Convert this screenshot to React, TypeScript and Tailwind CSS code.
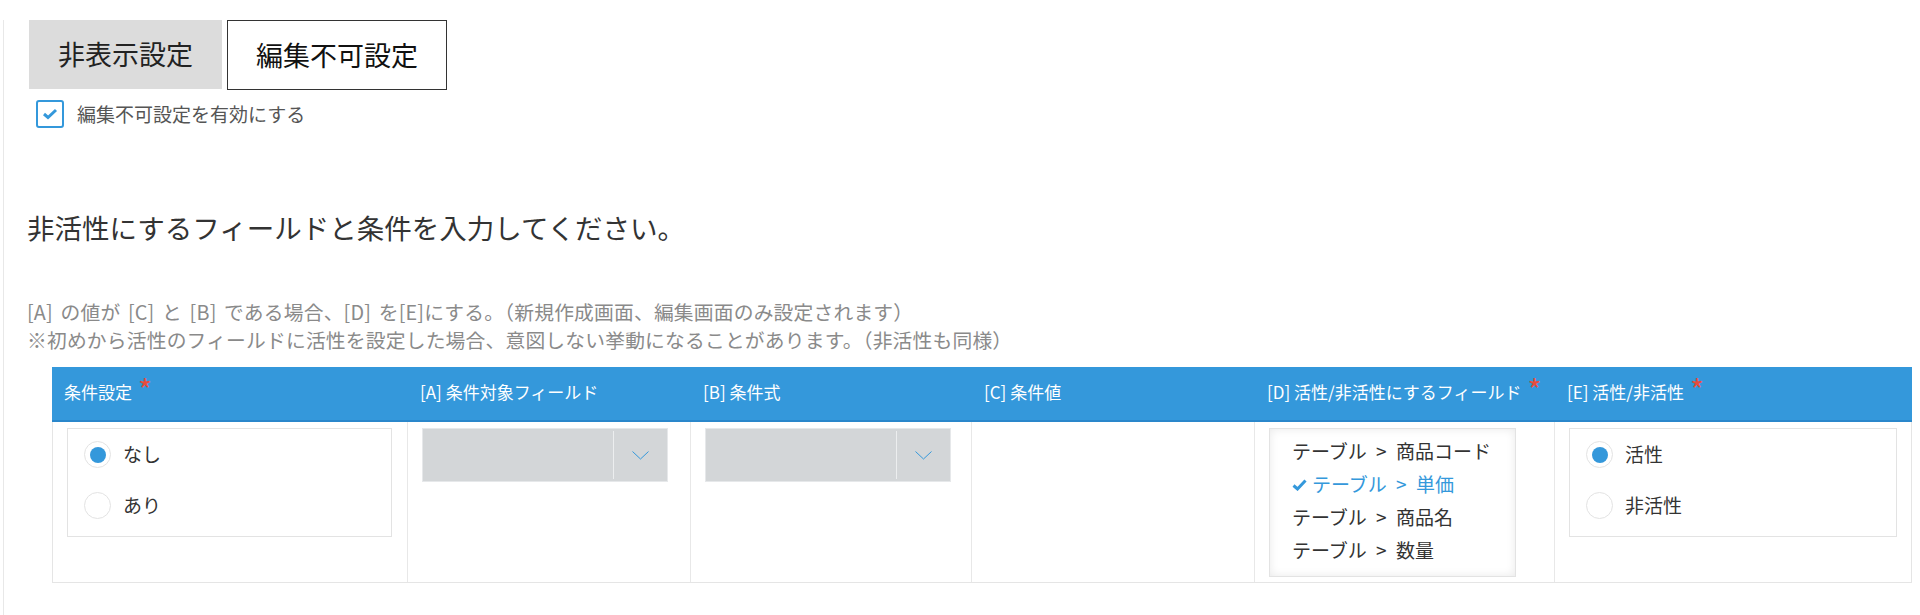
import { useState } from "react";

const FONT = "font-['Noto_Sans_CJK_JP','Noto_Sans',sans-serif]";

function Star() {
  return <span className="ml-[6px] text-[30px] leading-none text-[#e74c3c] relative top-[-3px]">*</span>;
}

function Radio({ checked, label }: { checked: boolean; label: string }) {
  return (
    <div className="flex items-center h-[27px]">
      <span className="w-[27px] h-[27px] rounded-full border-[1.5px] border-[#e3e3e3] flex items-center justify-center bg-white">
        {checked && <span className="w-[16px] h-[16px] rounded-full bg-[#3498db]" />}
      </span>
      <span className="ml-[12px] text-[19px] text-[#333]">{label}</span>
    </div>
  );
}

function RadioGroup({ options, value }: { options: string[]; value: number }) {
  return (
    <div className="border border-[#e3e3e3] h-[109px] pl-[16px] pt-[12px] flex flex-col gap-[24px]">
      {options.map((o, i) => <Radio key={o} checked={i === value} label={o} />)}
    </div>
  );
}

function Select() {
  return (
    <div className="w-[246px] h-[54px] bg-[#d3d6d8] border border-[#e6e8ea] flex">
      <div className="flex-1" />
      <div className="w-px my-[2px] bg-[#eceeef]" />
      <div className="w-[53px] flex items-center justify-center">
        <svg width="17" height="9" viewBox="0 0 17 9" fill="none">
          <path d="M0.5 0.5 L8.5 8 L16.5 0.5" stroke="#3498db" strokeWidth="1" />
        </svg>
      </div>
    </div>
  );
}

const FIELDS = ["テーブル > 商品コード", "テーブル > 単価", "テーブル > 商品名", "テーブル > 数量"];

function FieldList() {
  const selected = 1;
  return (
    <div className="w-[247px] h-[149px] border border-[#e3e3e3] shadow-[inset_0_0_10px_rgba(0,0,0,0.09)] pl-[22px] pt-[6px]">
      {FIELDS.map((f, i) => (
        <div key={f} className={`h-[33px] flex items-center text-[19px] [word-spacing:5px] ${i === selected ? "text-[#3498db]" : "text-[#333]"}`}>
          {i === selected && (
            <svg width="15" height="12" viewBox="0 0 15 12" className="mr-[5px]">
              <path d="M1.5 6.5 L5.5 10 L13.5 1.5" stroke="#3498db" strokeWidth="3" fill="none" />
            </svg>
          )}
          {f}
        </div>
      ))}
    </div>
  );
}

export default function App() {
  const [enabled, setEnabled] = useState(true);

  const headers: { label: string; req?: boolean; w: string }[] = [
    { label: "条件設定", req: true, w: "w-[356px]" },
    { label: "[A] 条件対象フィールド", w: "w-[283px]" },
    { label: "[B] 条件式", w: "w-[281px]" },
    { label: "[C] 条件値", w: "w-[283px]" },
    { label: "[D] 活性/非活性にするフィールド", req: true, w: "w-[300px]" },
    { label: "[E] 活性/非活性", req: true, w: "w-[357px]" },
  ];

  return (
    <div className={`min-h-screen w-full bg-white pt-5 pl-[3px] ${FONT}`}>
      <div className="border-l border-[#e8e8e8] pl-[25px] min-h-[595px]">
        {/* tabs */}
        <div className="flex gap-[5px]">
          <button className="w-[193px] h-[69px] bg-[#dcdcdc] text-[27px] text-[#222]">非表示設定</button>
          <button className="w-[220px] h-[70px] bg-white border border-[#333] text-[27px] text-[#111]">編集不可設定</button>
        </div>

        {/* enable checkbox */}
        <label className="mt-[10px] ml-[7px] flex items-center h-[28px] cursor-pointer" onClick={() => setEnabled(e => !e)}>
          <span className="w-[28px] h-[28px] border-2 border-[#3498db] rounded-[3px] bg-white flex items-center justify-center">
            {enabled && (
              <svg width="16" height="12" viewBox="0 0 16 12">
                <path d="M2 6 L6 9.5 L14 2" stroke="#3498db" strokeWidth="3" fill="none" />
              </svg>
            )}
          </span>
          <span className="ml-[13px] text-[19px] text-[#555]">編集不可設定を有効にする</span>
        </label>

        <h2 className="mt-[79px] text-[27.5px] leading-[40px] text-[#333] font-normal -ml-[2px]">非活性にするフィールドと条件を入力してください。</h2>

        <div className="mt-[51px] -ml-[2px] text-[19.8px] leading-[28px] text-[#8a8a8a] tracking-[0.17px]">
          <p className="[word-spacing:3px]">[A] の値が [C] と [B] である場合、[D] を[E]にする。（新規作成画面、編集画面のみ設定されます）</p>
          <p>※初めから活性のフィールドに活性を設定した場合、意図しない挙動になることがあります。（非活性も同様）</p>
        </div>

        {/* condition table */}
        <div className="mt-[13px] ml-[23px] w-[1860px]">
          <div className="flex h-[55px] bg-[#3498db] border-b-2 border-[#2a87cb]">
            {headers.map(h => (
              <div key={h.label} className={`${h.w} pl-[12px] pb-[3px] flex items-center text-[17px] text-white`}>
                {h.label}
                {h.req && <Star />}
              </div>
            ))}
          </div>
          <div className="flex h-[161px] border border-t-0 border-[#e5e5e5]">
            <div className="w-[355px] pl-[14px] pr-[15px] pt-[6px] border-r border-[#e8e8e8]">
              <RadioGroup options={["なし", "あり"]} value={0} />
            </div>
            <div className="w-[283px] pl-[14px] pt-[6px] border-r border-[#e8e8e8]">
              <Select />
            </div>
            <div className="w-[281px] pl-[14px] pt-[6px] border-r border-[#e8e8e8]">
              <Select />
            </div>
            <div className="w-[283px] border-r border-[#e8e8e8]" />
            <div className="w-[300px] pl-[14px] pt-[6px] border-r border-[#e8e8e8]">
              <FieldList />
            </div>
            <div className="flex-1 pl-[14px] pr-[14px] pt-[6px]">
              <RadioGroup options={["活性", "非活性"]} value={0} />
            </div>
          </div>
        </div>
      </div>
    </div>
  );
}
